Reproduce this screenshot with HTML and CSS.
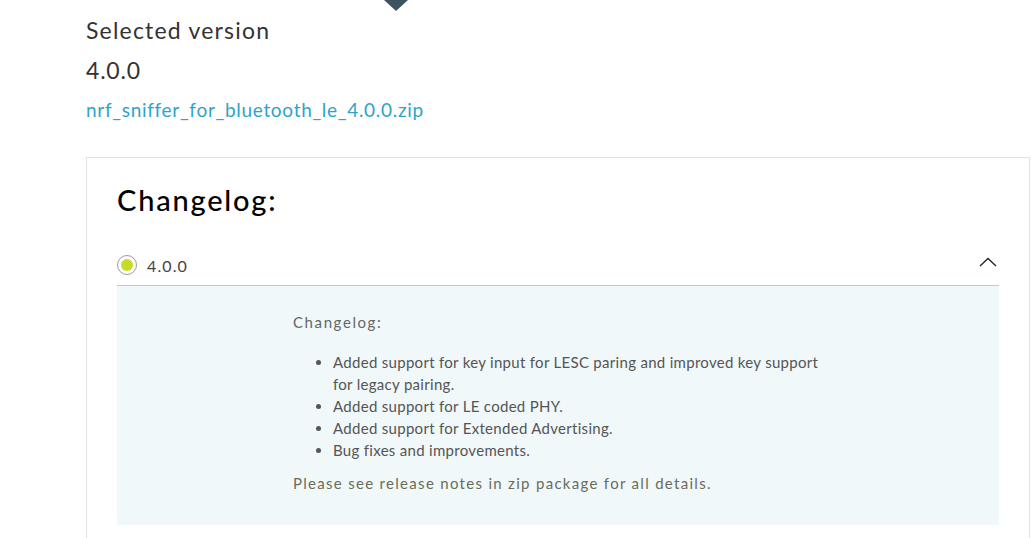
FILE: index.html
```html
<!DOCTYPE html>
<html>
<head>
<meta charset="utf-8">
<link rel="stylesheet" href="styles.css">
</head>
<body>
<div class="page">
  <div class="pointer"></div>
  <section class="selected">
    <h2 class="sel-title">Selected version</h2>
    <div class="sel-version">4.0.0</div>
    <a class="sel-link" href="#">nrf_sniffer_for_bluetooth_le_4.0.0.zip</a>
  </section>
  <section class="card">
    <h1 class="card-title">Changelog:</h1>
    <div class="acc-head">
      <span class="radio"><span class="radio-dot"></span></span>
      <span class="acc-label">4.0.0</span>
      <svg class="chevron" width="18" height="10" viewBox="0 0 18 10"><path d="M1 9 L9 1.5 L17 9" fill="none" stroke="#222" stroke-width="1.3"/></svg>
    </div>
    <div class="acc-body">
      <div class="notes">
        <p class="notes-title">Changelog:</p>
        <ul class="notes-list">
          <li>Added support for key input for LESC paring and improved key support for legacy pairing.</li>
          <li>Added support for LE coded PHY.</li>
          <li>Added support for Extended Advertising.</li>
          <li>Bug fixes and improvements.</li>
        </ul>
        <p class="notes-foot">Please see release notes in zip package for all details.</p>
      </div>
    </div>
  </section>
</div>
</body>
</html>
```
FILE: styles.css
```css
html, body {
  margin: 0;
  padding: 0;
  background: #fff;
  overflow: hidden;
}
body {
  font-family: "Lato", "Open Sans", sans-serif;
  color: #333;
}
.page {
  position: relative;
  padding-left: 86px;
  width: 944px;
  height: 538px;
}
.pointer {
  position: absolute;
  left: 384px;
  top: 0;
  width: 0;
  height: 0;
  border-left: 12px solid transparent;
  border-right: 12px solid transparent;
  border-top: 11px solid #3e5360;
}
.selected {
  padding-top: 15px;
}
.sel-title {
  margin: 0;
  font-size: 23px;
  font-weight: 400;
  line-height: 30px;
  color: #333;
  letter-spacing: 1.2px;
}
.sel-version {
  margin-top: 10px;
  font-size: 23px;
  line-height: 30px;
  color: #333;
  letter-spacing: 0.8px;
}
.sel-link {
  display: block;
  margin-top: 10px;
  font-size: 19px;
  line-height: 30px;
  color: #2ea3cc;
  text-decoration: none;
  letter-spacing: 0.7px;
}
.card {
  margin-top: 32px;
  border: 1px solid #e2e2e2;
  padding: 0 30px;
  height: 400px;
}
.card-title {
  margin: 22px 0 0;
  font-size: 29px;
  font-weight: 500;
  line-height: 40px;
  color: #000;
  letter-spacing: 1.8px;
}
.acc-head {
  display: flex;
  align-items: center;
  margin-top: 25px;
  height: 40px;
  border-bottom: 1px solid #c8c8c8;
}
.radio {
  width: 18px;
  height: 18px;
  border: 1px solid #9a9a9a;
  border-radius: 50%;
  display: flex;
  align-items: center;
  justify-content: center;
  background: #fff;
}
.radio-dot {
  width: 12px;
  height: 12px;
  border-radius: 50%;
  background: #c8d92a;
}
.acc-label {
  margin-left: 10px;
  font-size: 16px;
  color: #444;
  letter-spacing: 1.1px;
}
.chevron {
  margin-left: auto;
  margin-right: 2px;
  margin-bottom: 6px;
}
.acc-body {
  background: #f0f8fa;
  height: 239px;
  display: flex;
  justify-content: center;
}
.notes {
  width: 530px;
  padding-top: 25px;
  font-size: 15px;
  color: #555;
}
.notes-title {
  margin: 0;
  line-height: 22px;
  color: #666;
  letter-spacing: 1.6px;
}
.notes-list {
  margin: 18px 0 0;
  padding-left: 40px;
  line-height: 22px;
  color: #555;
  letter-spacing: 0.3px;
}
.notes-foot {
  margin: 11px 0 0;
  line-height: 22px;
  color: #6b6b5a;
  letter-spacing: 1.3px;
}
```
